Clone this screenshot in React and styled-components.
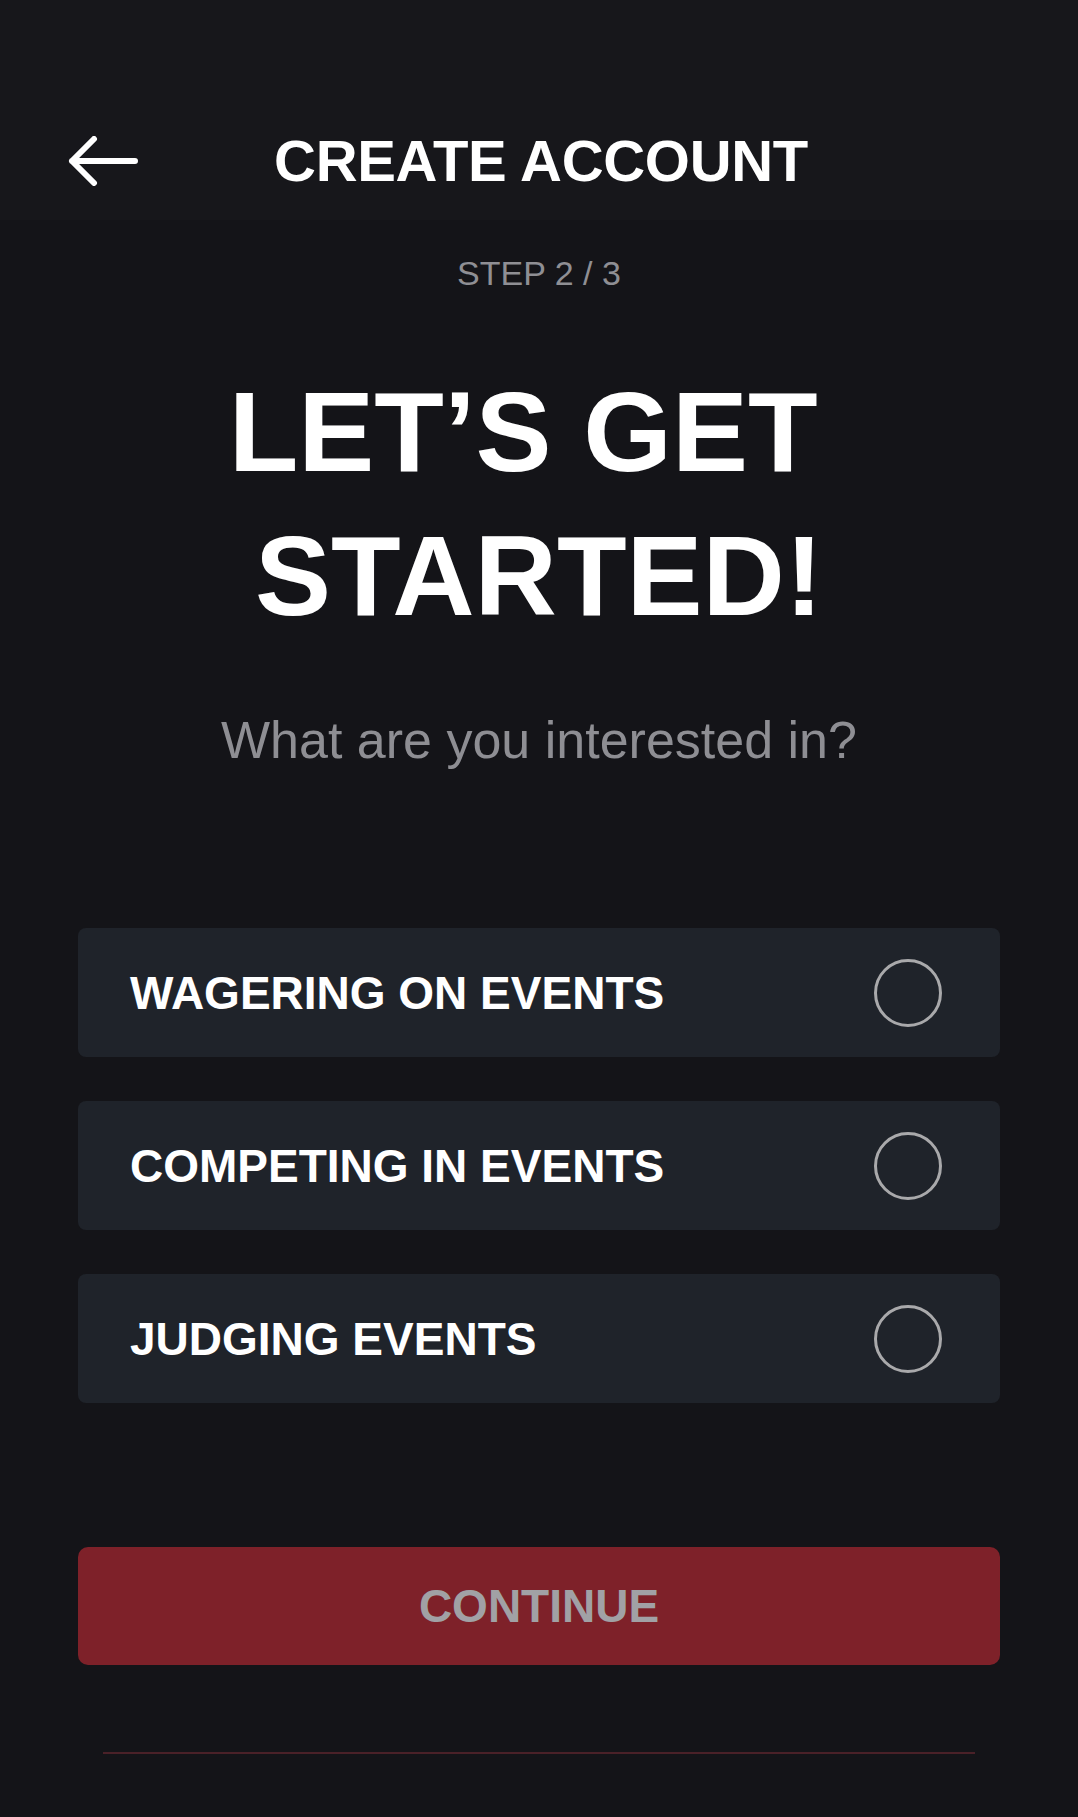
import React from 'react'
import styled, { createGlobalStyle } from 'styled-components'

const GlobalStyle = createGlobalStyle`
  html, body {
    margin: 0;
    padding: 0;
    background: #141418;
  }
  body {
    font-family: "Liberation Sans", Arial, sans-serif;
  }
`

const options = ['WAGERING ON EVENTS', 'COMPETING IN EVENTS', 'JUDGING EVENTS']

export default function App() {
  return (
    <Page>
      <GlobalStyle />
      <Header>
        <BackButton aria-label="back">
          <svg width="74" height="50" viewBox="0 0 74 50" fill="none">
            <path d="M69 25H6M28 3L6 25L28 47" stroke="#ffffff" strokeWidth="6" strokeLinecap="round" strokeLinejoin="round" />
          </svg>
        </BackButton>
        <Title>CREATE ACCOUNT</Title>
        <span />
      </Header>

      <Step>STEP 2 / 3</Step>
      {/* the nbsp keeps the first line's trailing space, as in the design */}
      <Headline>{'LET’S GET\u00A0'}<br />STARTED!</Headline>
      <Question>What are you interested in?</Question>

      <OptionList>
        {options.map((label) => (
          <OptionCard key={label}>
            <OptionLabel>{label}</OptionLabel>
            <Radio />
          </OptionCard>
        ))}
      </OptionList>

      <ContinueButton>CONTINUE</ContinueButton>
      <Divider />
    </Page>
  )
}

const Page = styled.div`
  width: 1078px;
  min-height: 1817px;
  background: #141418;
  display: flex;
  flex-direction: column;
  align-items: center;
  color: #ffffff;
`

const Header = styled.header`
  width: 100%;
  box-sizing: border-box;
  height: 220px;
  padding: 128px 62px 0 66px;
  background: #17171b;
  display: grid;
  grid-template-columns: 1fr auto 1fr;
  align-items: start;
`

const BackButton = styled.button`
  background: none;
  border: none;
  padding: 0;
  height: 66px;
  display: flex;
  align-items: center;
  justify-self: start;
  cursor: pointer;
`

const Title = styled.h1`
  margin: 0;
  font-size: 58px;
  line-height: 66px;
  font-weight: 700;
  color: #ffffff;
  letter-spacing: -0.3px;
`

const Step = styled.div`
  margin-top: 33px;
  font-size: 34px;
  line-height: 40px;
  color: #8f8f94;
`

const Headline = styled.h2`
  margin: 67px 0 0;
  font-size: 114px;
  line-height: 144px;
  font-weight: 700;
  text-align: center;
  color: #ffffff;
`

const Question = styled.p`
  margin: 61px 0 0;
  font-size: 52px;
  line-height: 62px;
  color: #8e8e93;
`

const OptionList = styled.div`
  margin-top: 157px;
  width: 922px;
  display: flex;
  flex-direction: column;
  gap: 44px;
`

const OptionCard = styled.div`
  height: 129px;
  box-sizing: border-box;
  padding: 0 58px 0 52px;
  background: #1f232a;
  border-radius: 8px;
  display: flex;
  align-items: center;
  justify-content: space-between;
`

const OptionLabel = styled.span`
  font-size: 46px;
  font-weight: 700;
  color: #ffffff;
`

const Radio = styled.span`
  width: 68px;
  height: 68px;
  box-sizing: border-box;
  border: 3px solid #a9a9ab;
  border-radius: 50%;
`

const ContinueButton = styled.button`
  margin-top: 144px;
  width: 922px;
  height: 118px;
  border: none;
  border-radius: 10px;
  background: #7e2129;
  color: #a1a1a5;
  font-family: "Liberation Sans", Arial, sans-serif;
  font-size: 46px;
  font-weight: 700;
  cursor: pointer;
`

const Divider = styled.div`
  margin-top: 87px;
  width: 872px;
  height: 2px;
  background: #4a2128;
`
